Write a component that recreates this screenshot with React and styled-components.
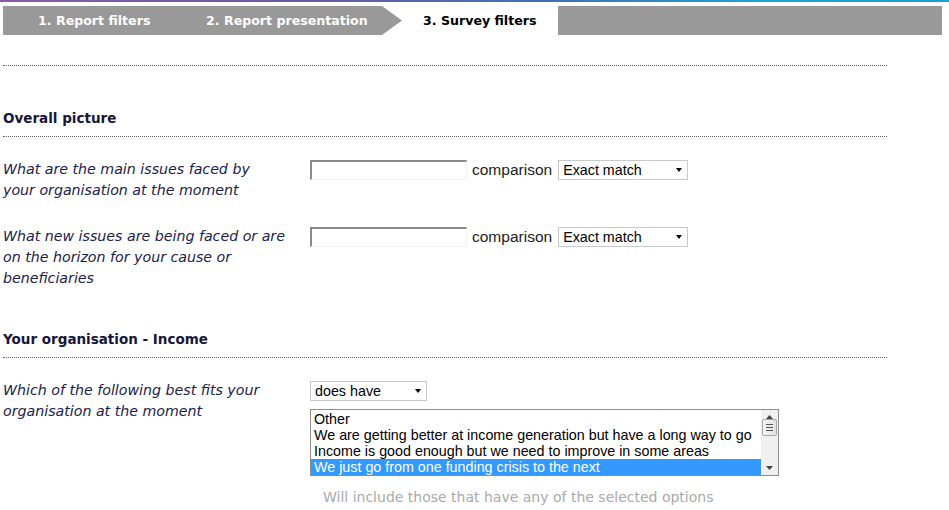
import React from 'react';
import styled, { createGlobalStyle } from 'styled-components';

const GlobalStyle = createGlobalStyle`
  html, body {
    margin: 0;
    padding: 0;
    background: #fff;
  }
  body {
    font-family: "DejaVu Sans", Verdana, sans-serif;
  }
`;

const Page = styled.div`
  width: 949px;
  height: 510px;
  overflow: hidden;
`;

const TopLine = styled.div`
  height: 2px;
  background: linear-gradient(to right, #8c5aa6 0%, #6a5aa2 30%, #3f74b4 60%, #1ea3d6 80%, #1a9fd0 100%);
`;

const Content = styled.div`
  padding: 4px 0 0 3px;
`;

const Steps = styled.div`
  display: flex;
  height: 29px;
  width: 939px;
`;

const Step = styled.div`
  display: flex;
  align-items: center;
  height: 100%;
  box-sizing: border-box;
  padding-left: ${p => p.$pl}px;
  width: ${p => p.$w}px;
  background: ${p => (p.$active ? '#fff' : '#999')};
  color: ${p => (p.$active ? '#000' : '#fff')};
  font-weight: bold;
  font-size: 12.6px;
  white-space: nowrap;
  clip-path: ${p =>
    p.$arrow
      ? 'polygon(0 0, calc(100% - 20px) 0, 100% 50%, calc(100% - 20px) 100%, 0 100%)'
      : 'none'};
`;

const Filler = styled.div`
  flex: 1;
  background: #999;
`;

const Divider = styled.div`
  width: 884px;
  border-bottom: 1px dotted #666;
  margin-top: ${p => p.$mt || 0}px;
`;

const Heading = styled.h3`
  margin: ${p => p.$mt}px 0 0;
  width: 884px;
  padding-bottom: 8px;
  border-bottom: 1px dotted #666;
  font-size: 13.5px;
  line-height: 20px;
  font-weight: bold;
  color: #16163a;
`;

const Row = styled.div`
  display: grid;
  grid-template-columns: 307px auto;
  align-items: start;
  margin-top: 22px;
  margin-bottom: 25px;
`;

const Question = styled.div`
  font-size: 14.2px;
  line-height: 21px;
  font-style: italic;
  white-space: nowrap;
  color: #20204e;
`;

const Controls = styled.div`
  display: flex;
  flex-direction: column;
  align-items: flex-start;
  padding-top: 1px;
`;

const Inline = styled.div`
  display: flex;
  align-items: center;
`;

const TextBox = styled.input`
  box-sizing: border-box;
  width: 157px;
  height: 20px;
  margin: 0;
  border-top: 2px solid #8a8a8a;
  border-left: 2px solid #8a8a8a;
  border-right: 1px solid #f2f2f2;
  border-bottom: 1px solid #f2f2f2;
  background: #fff;
  outline: none;
`;

const Word = styled.span`
  font-family: "Liberation Sans", Arial, sans-serif;
  font-size: 15.5px;
  color: #222;
  margin: 0 6px 0 5px;
`;

const Dropdown = styled.div`
  box-sizing: border-box;
  width: ${p => p.$w}px;
  height: 20px;
  border: 1px solid #cacaca;
  background: #fff;
  display: flex;
  align-items: center;
  justify-content: space-between;
  padding: 0 4px 0 4px;
  font-family: "Liberation Sans", Arial, sans-serif;
  font-size: 14.3px;
  color: #000;
`;

const Caret = styled.span`
  width: 0;
  height: 0;
  border-left: 3.5px solid transparent;
  border-right: 3.5px solid transparent;
  border-top: 4px solid #000;
  margin-right: 1px;
`;

const ListBox = styled.div`
  box-sizing: border-box;
  margin-top: 8px;
  width: 469px;
  height: 67px;
  border: 1px solid #8e8e8e;
  display: flex;
  background: #fff;
`;

const Options = styled.div`
  flex: 1;
  padding-top: 1px;
`;

const Option = styled.div`
  height: 16px;
  line-height: 16px;
  padding-left: 3px;
  font-family: "Liberation Sans", Arial, sans-serif;
  font-size: 14.3px;
  white-space: nowrap;
  color: ${p => (p.$selected ? '#fff' : '#000')};
  background: ${p => (p.$selected ? '#3399ff' : 'transparent')};
`;

const Scrollbar = styled.div`
  width: 17px;
  background: #f0f0f0;
  display: flex;
  flex-direction: column;
  align-items: center;
  justify-content: space-between;
  padding: 5px 0 5px;
  box-sizing: border-box;
`;

const Thumb = styled.div`
  box-sizing: border-box;
  width: 15px;
  height: 17px;
  margin-top: -30px;
  border: 1px solid #a8a8a8;
  border-radius: 2px;
  background: linear-gradient(to right, #f4f4f4, #e2e2e2);
  display: flex;
  flex-direction: column;
  align-items: center;
  justify-content: center;
  gap: 2px;
`;

const Grip = styled.span`
  width: 7px;
  height: 1px;
  background: #555;
`;

const Hint = styled.div`
  margin: 13px 0 0 13px;
  font-size: 14px;
  color: #aaa;
`;

function Arrow({ up }) {
  return (
    <svg width="7" height="4" viewBox="0 0 7 4">
      <path d={up ? 'M0 4 L3.5 0 L7 4 Z' : 'M0 0 L3.5 4 L7 0 Z'} fill="#444" />
    </svg>
  );
}

function Label({ lines }) {
  return (
    <Question>
      {lines.map((l, i) => (
        <React.Fragment key={i}>
          {i > 0 && <br />}
          {l}
        </React.Fragment>
      ))}
    </Question>
  );
}

function TextQuestion({ lines }) {
  return (
    <Row>
      <Label lines={lines} />
      <Controls>
        <Inline>
          <TextBox type="text" />
          <Word>comparison</Word>
          <Dropdown $w={130}>
            Exact match
            <Caret />
          </Dropdown>
        </Inline>
      </Controls>
    </Row>
  );
}

const incomeOptions = [
  'Other',
  'We are getting better at income generation but have a long way to go',
  'Income is good enough but we need to improve in some areas',
  'We just go from one funding crisis to the next',
];

export default function App() {
  return (
    <Page>
      <GlobalStyle />
      <TopLine />
      <Content>
        <Steps>
          <Step $w={182} $pl={35}>1. Report filters</Step>
          <Step $w={217} $pl={21} $arrow>2. Report presentation</Step>
          <Step $w={156} $pl={21} $active>3. Survey filters</Step>
          <Filler />
        </Steps>

        <Divider $mt={30} />

        <Heading $mt={42}>Overall picture</Heading>
        <TextQuestion lines={['What are the main issues faced by', 'your organisation at the moment']} />
        <TextQuestion
          lines={['What new issues are being faced or are', 'on the horizon for your cause or', 'beneficiaries']}
        />

        <Heading $mt={40}>Your organisation - Income</Heading>
        <Row>
          <Label lines={['Which of the following best fits your', 'organisation at the moment']} />
          <Controls>
            <Dropdown $w={117}>
              does have
              <Caret />
            </Dropdown>
            <ListBox>
              <Options>
                {incomeOptions.map((o, i) => (
                  <Option key={o} $selected={i === 3}>{o}</Option>
                ))}
              </Options>
              <Scrollbar>
                <Arrow up />
                <Thumb>
                  <Grip />
                  <Grip />
                  <Grip />
                </Thumb>
                <Arrow />
              </Scrollbar>
            </ListBox>
            <Hint>Will include those that have any of the selected options</Hint>
          </Controls>
        </Row>
      </Content>
    </Page>
  );
}
